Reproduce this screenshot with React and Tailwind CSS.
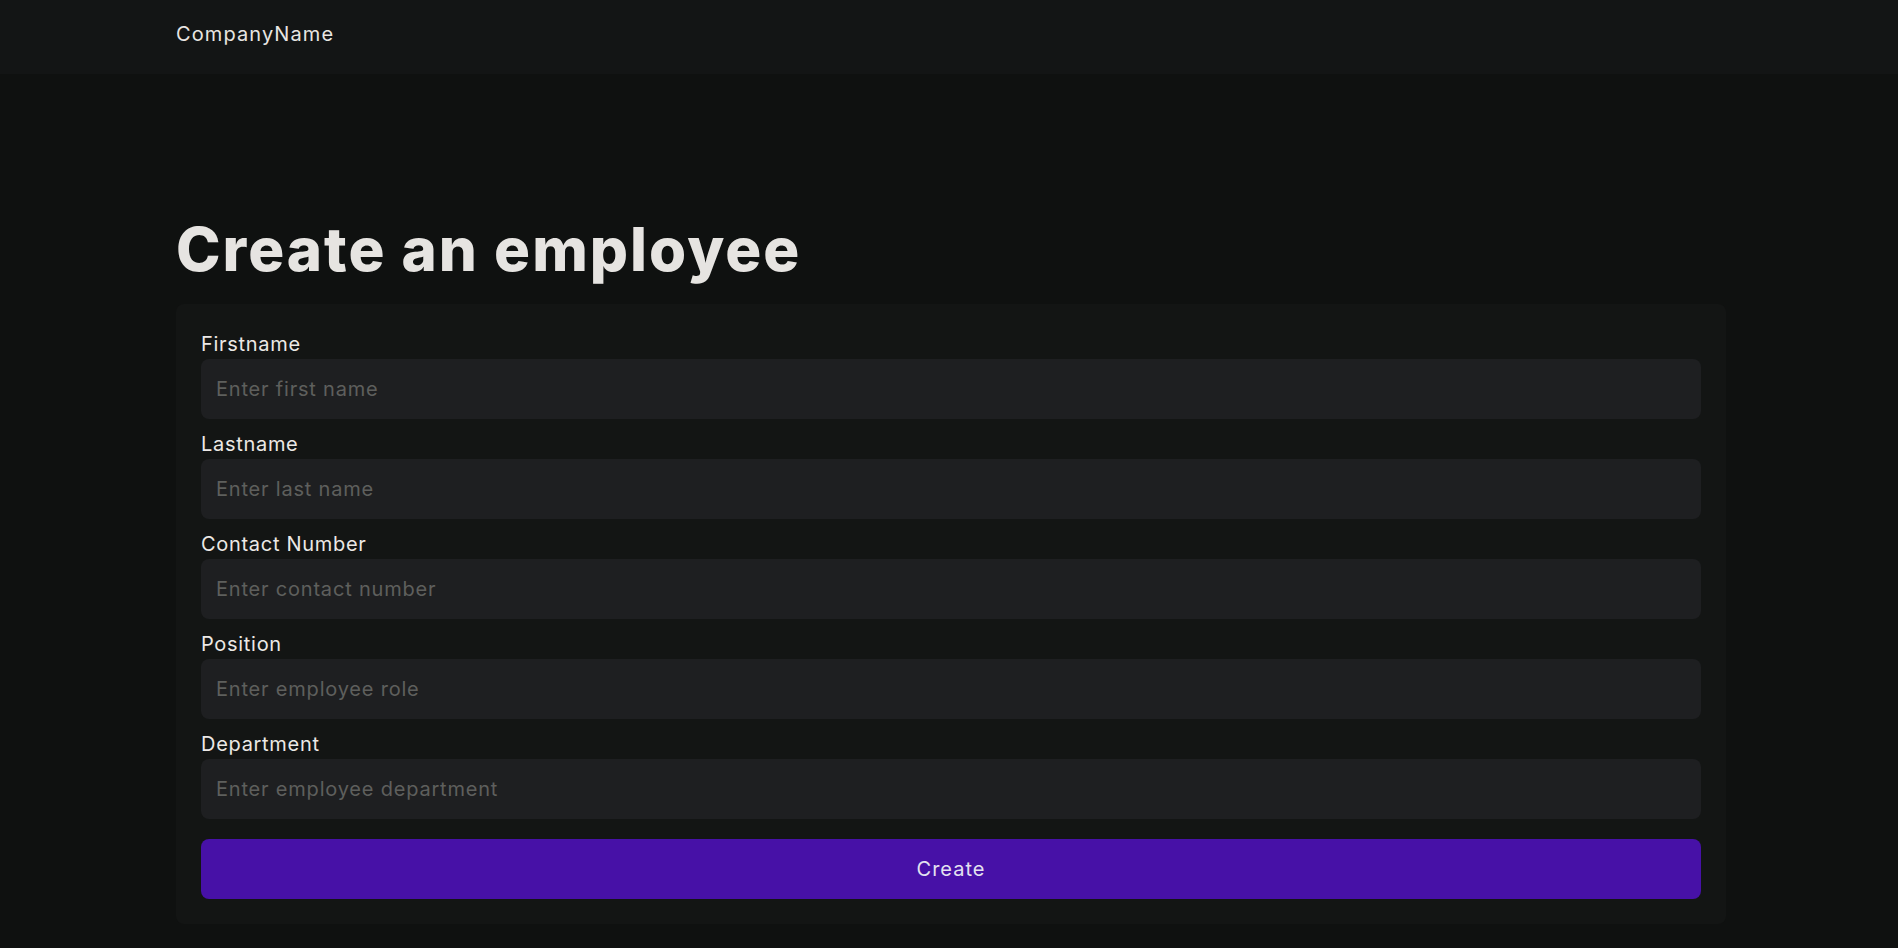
import React from "react";

const fields = [
  { label: "Firstname", placeholder: "Enter first name" },
  { label: "Lastname", placeholder: "Enter last name" },
  { label: "Contact Number", placeholder: "Enter contact number" },
  { label: "Position", placeholder: "Enter employee role" },
  { label: "Department", placeholder: "Enter employee department" },
];

export default function App() {
  return (
    <div
      className="min-h-[948px] w-full bg-[#0f1110] text-[#e8e6e3]"
      style={{ fontFamily: "Inter, 'Noto Sans', sans-serif" }}
    >
      <header className="h-[74px] bg-[#131515] pl-[176px] pt-[19px]">
        <span className="text-[20px] leading-[30px] tracking-[1.1px] text-[#e8e6e3]">CompanyName</span>
      </header>
      <main className="pl-[176px]">
        <div className="w-[1550px]">
          <h1 className="mt-[145px] mb-[25px] text-[60px] leading-[60px] font-extrabold tracking-[2px] text-[#e6e4e1]">
            Create an employee
          </h1>
          <form
            className="flex flex-col gap-[10px] rounded-lg bg-[#131514] p-[25px]"
            onSubmit={(e) => e.preventDefault()}
          >
            {fields.map((f) => (
              <label key={f.label} className="flex flex-col">
                <span className="text-[20px] leading-[30px] tracking-[0.7px] text-[#ece9e6]">{f.label}</span>
                <input
                  type="text"
                  placeholder={f.placeholder}
                  className="h-[60px] w-full rounded-lg bg-[#1e1f21] px-[15px] text-[20px] tracking-[0.8px] text-[#e8e6e3] outline-none placeholder:text-[#5e5f5d]"
                />
              </label>
            ))}
            <button
              type="submit"
              className="mt-[10px] h-[60px] w-full rounded-lg bg-[#4711a7] text-[20px] tracking-[1px] text-[#e4e2f0]"
            >
              Create
            </button>
          </form>
        </div>
      </main>
    </div>
  );
}
